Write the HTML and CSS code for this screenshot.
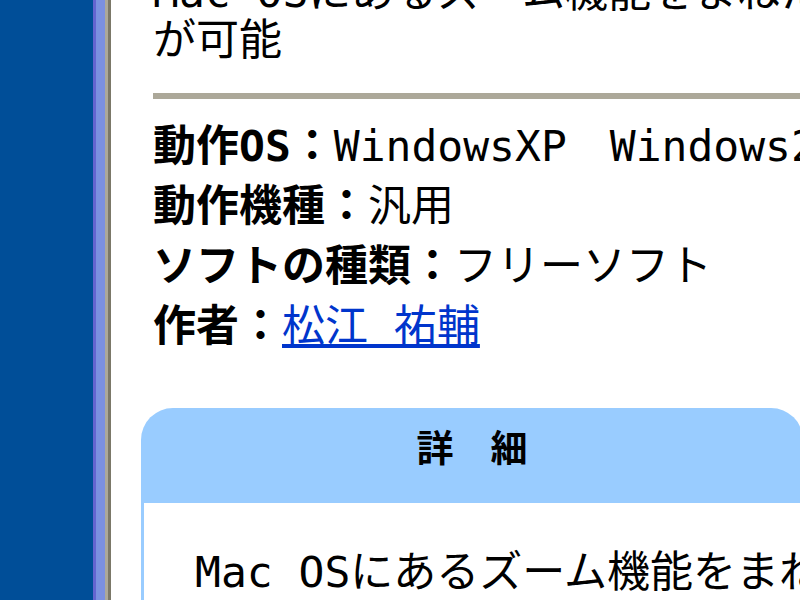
FILE: index.html
```html
<!DOCTYPE html>
<html lang="ja">

<head>
    <meta charset="UTF-8">
    <meta name="viewport" content="width=device-width, initial-scale=1.0">
    <title>ソフト詳細</title>
    <link rel="stylesheet" href="styles.css">
</head>

<body>
    <div id="side"></div>
    <div class="edge edge1"></div>
    <div class="edge edge2"></div>
    <div class="edge edge3"></div>
    <div class="edge edge4"></div>

    <div id="main">
        <p class="summary">Mac OSにあるズーム機能をまねたソフト。画面の拡大表示<br>が可能</p>
        <div class="rule"></div>
        <ul class="spec">
            <li><b>動作OS：</b>WindowsXP　Windows2000</li>
            <li><b>動作機種：</b>汎用</li>
            <li><b>ソフトの種類：</b>フリーソフト</li>
            <li><b>作者：</b><a href="#">松江 祐輔</a></li>
        </ul>
        <div class="detail">
            <h4>詳　細</h4>
            <div class="detail-body">
                <p>Mac OSにあるズーム機能をまねたソフトです。</p>
            </div>
        </div>
    </div>
</body>

</html>
```

FILE: styles.css
```css
* {
    margin: 0;
    padding: 0;
}

html,
body {
    height: 100%;
}

body {
    display: flex;
    overflow: hidden;
    background-color: #fff;
    color: #000;
    font-family: "DejaVu Sans Mono", "Noto Sans CJK JP", monospace;
    font-size: 43px;
}

#side {
    flex: none;
    width: 93px;
    background-color: #004e98;
}

.edge {
    flex: none;
}

.edge1 {
    width: 3px;
    background-color: #6464d0;
}

.edge2 {
    width: 9px;
    background-color: #7b90e0;
}

.edge3 {
    width: 3px;
    background-color: #aca899;
}

.edge4 {
    width: 3px;
    background-color: #7b7868;
}

#main {
    flex: none;
    width: 662px;
    padding-left: 30px;
}

.summary {
    margin: -32px 0 0 12px;
    line-height: 48px;
    white-space: nowrap;
}

.rule {
    height: 6px;
    margin: 29px 0 0 12px;
    width: 700px;
    background-color: #aca899;
}

.spec {
    list-style: none;
    margin: 17px 0 0 12px;
    line-height: 60px;
    white-space: nowrap;
}

.spec a {
    color: #0035cc;
}

.detail {
    margin-top: 52px;
}

.detail h4 {
    height: 95px;
    line-height: 84px;
    border-radius: 32px 32px 0 0;
    background-color: #99ccff;
    text-align: center;
    font-size: 37px;
}

.detail-body {
    border-left: 3px solid #99ccff;
    padding: 34px 0 40px 51px;
    white-space: nowrap;
}
```
